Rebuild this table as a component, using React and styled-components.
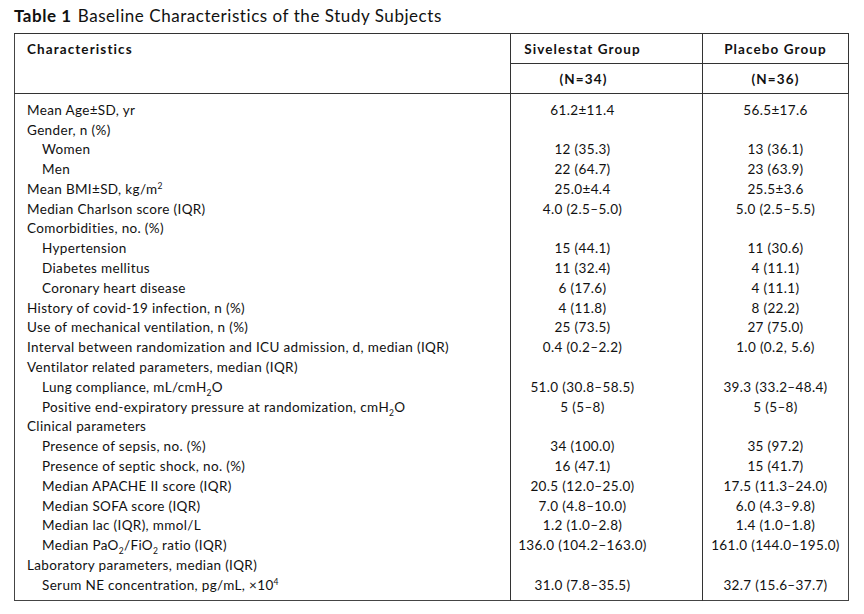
import React from 'react';
import styled, { createGlobalStyle } from 'styled-components';

const GlobalStyle = createGlobalStyle`
  body {
    margin: 0;
    background: #ffffff;
    font-family: 'Lato', 'Liberation Sans', sans-serif;
    color: #111;
  }
`;

const Page = styled.div`
  width: 864px;
  height: 614px;
  padding: 6px 0 0 14px;
  box-sizing: border-box;
`;

const Caption = styled.div`
  font-size: 17px;
  letter-spacing: 0.55px;
  line-height: 20px;
  color: #111;
  margin-bottom: 7px;

  b {
    font-weight: 700;
    margin-right: 6px;
  }
`;

const Table = styled.table`
  border-collapse: collapse;
  width: 834px;
  border: 1.5px solid #444;
  font-size: 13.5px;
  letter-spacing: 0.35px;
  table-layout: fixed;
`;

const HeadCell = styled.th`
  height: 29px;
  padding: 0;
  font-weight: 700;
  font-size: 13.5px;
  letter-spacing: 1.1px;
  text-align: ${p => (p.$left ? 'left' : 'center')};
  vertical-align: ${p => (p.$top ? 'top' : 'middle')};
  padding-left: ${p => (p.$left ? '12px' : '0')};
  padding-top: ${p => (p.$top ? '7px' : '0')};
  padding-right: ${p => p.$pr || '0'};
  border: 1.5px solid #333;
  border-left: ${p => (p.$left ? 'none' : '1.5px solid #333')};
`;

const Row = styled.tr`
  height: ${p => (p.$first ? '27px' : p.$last ? '25px' : '19.8px')};
`;

const LabelCell = styled.td`
  padding: 0 0 0 ${p => (p.$sub ? '27px' : '12px')};
  vertical-align: ${p => (p.$first ? 'bottom' : p.$last ? 'top' : 'middle')};
  white-space: nowrap;
  line-height: 19.8px;

  sub, sup {
    font-size: 8.5px;
    line-height: 0;
  }
`;

const ValueCell = styled.td`
  text-align: center;
  padding: 0 ${p => p.$pr || '0'} 0 0;
  border-left: 1.5px solid #333;
  vertical-align: ${p => (p.$first ? 'bottom' : p.$last ? 'top' : 'middle')};
  white-space: nowrap;
  line-height: 19.8px;
`;

const rows = [
  { label: 'Mean Age±SD, yr', a: '61.2±11.4', b: '56.5±17.6' },
  { label: 'Gender, n (%)', a: '', b: '' },
  { label: 'Women', sub: true, a: '12 (35.3)', b: '13 (36.1)' },
  { label: 'Men', sub: true, a: '22 (64.7)', b: '23 (63.9)' },
  { label: <>Mean BMI±SD, kg/m<sup>2</sup></>, a: '25.0±4.4', b: '25.5±3.6' },
  { label: 'Median Charlson score (IQR)', a: '4.0 (2.5–5.0)', b: '5.0 (2.5–5.5)' },
  { label: 'Comorbidities, no. (%)', a: '', b: '' },
  { label: 'Hypertension', sub: true, a: '15 (44.1)', b: '11 (30.6)' },
  { label: 'Diabetes mellitus', sub: true, a: '11 (32.4)', b: '4 (11.1)' },
  { label: 'Coronary heart disease', sub: true, a: '6 (17.6)', b: '4 (11.1)' },
  { label: 'History of covid-19 infection, n (%)', a: '4 (11.8)', b: '8 (22.2)' },
  { label: 'Use of mechanical ventilation, n (%)', a: '25 (73.5)', b: '27 (75.0)' },
  { label: 'Interval between randomization and ICU admission, d, median (IQR)', a: '0.4 (0.2–2.2)', b: '1.0 (0.2, 5.6)' },
  { label: 'Ventilator related parameters, median (IQR)', a: '', b: '' },
  { label: <>Lung compliance, mL/cmH<sub>2</sub>O</>, sub: true, a: '51.0 (30.8–58.5)', b: '39.3 (33.2–48.4)' },
  { label: <>Positive end-expiratory pressure at randomization, cmH<sub>2</sub>O</>, sub: true, a: '5 (5–8)', b: '5 (5–8)' },
  { label: 'Clinical parameters', a: '', b: '' },
  { label: 'Presence of sepsis, no. (%)', sub: true, a: '34 (100.0)', b: '35 (97.2)' },
  { label: 'Presence of septic shock, no. (%)', sub: true, a: '16 (47.1)', b: '15 (41.7)' },
  { label: 'Median APACHE II score (IQR)', sub: true, a: '20.5 (12.0–25.0)', b: '17.5 (11.3–24.0)' },
  { label: 'Median SOFA score (IQR)', sub: true, a: '7.0 (4.8–10.0)', b: '6.0 (4.3–9.8)' },
  { label: 'Median lac (IQR), mmol/L', sub: true, a: '1.2 (1.0–2.8)', b: '1.4 (1.0–1.8)' },
  { label: <>Median PaO<sub>2</sub>/FiO<sub>2</sub> ratio (IQR)</>, sub: true, a: '136.0 (104.2–163.0)', b: '161.0 (144.0–195.0)' },
  { label: 'Laboratory parameters, median (IQR)', a: '', b: '' },
  { label: <>Serum NE concentration, pg/mL, ×10<sup>4</sup></>, sub: true, a: '31.0 (7.8–35.5)', b: '32.7 (15.6–37.7)' },
];

export default function App() {
  return (
    <Page>
      <GlobalStyle />
      <Caption>
        <b>Table 1</b>Baseline Characteristics of the Study Subjects
      </Caption>
      <Table>
        <colgroup>
          <col style={{ width: '496px' }} />
          <col style={{ width: '192px' }} />
          <col style={{ width: '146px' }} />
        </colgroup>
        <thead>
          <tr>
            <HeadCell $left $top rowSpan={2}>Characteristics</HeadCell>
            <HeadCell $pr="48px">Sivelestat Group</HeadCell>
            <HeadCell>Placebo Group</HeadCell>
          </tr>
          <tr>
            <HeadCell $pr="46px">(N=34)</HeadCell>
            <HeadCell>(N=36)</HeadCell>
          </tr>
        </thead>
        <tbody>
          {rows.map((r, i) => {
            const first = i === 0;
            const last = i === rows.length - 1;
            return (
              <Row key={i} $first={first} $last={last}>
                <LabelCell $sub={r.sub} $first={first} $last={last}>{r.label}</LabelCell>
                <ValueCell $pr="48px" $first={first} $last={last}>{r.a}</ValueCell>
                <ValueCell $first={first} $last={last}>{r.b}</ValueCell>
              </Row>
            );
          })}
        </tbody>
      </Table>
    </Page>
  );
}
